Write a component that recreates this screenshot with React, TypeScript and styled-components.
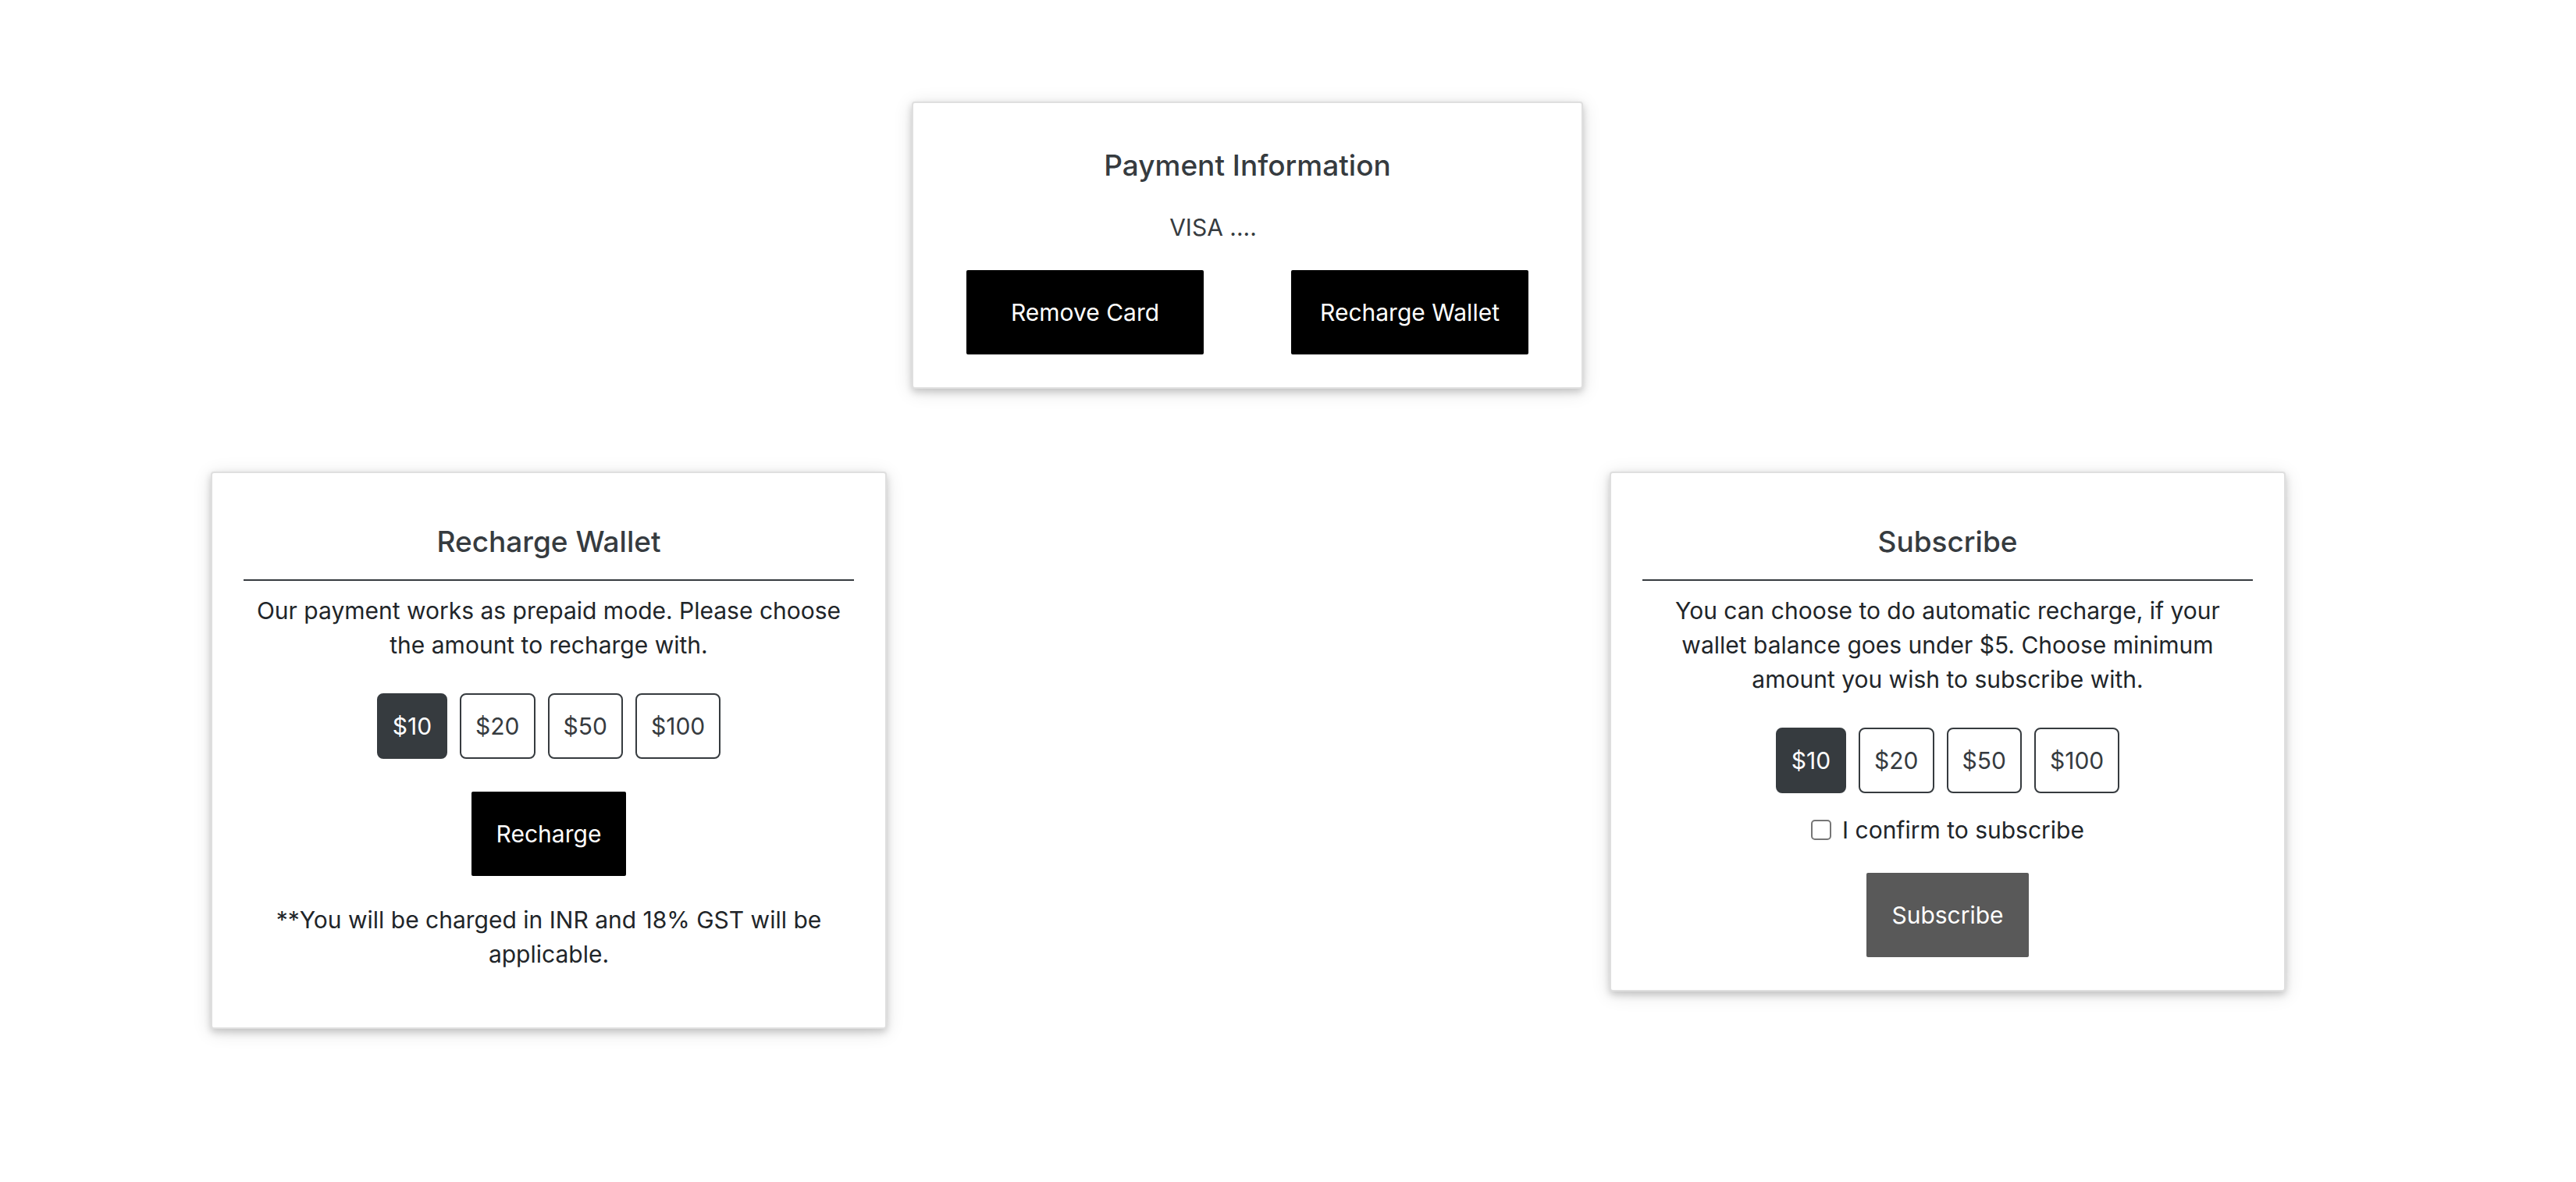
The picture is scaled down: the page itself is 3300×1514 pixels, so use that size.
import React, { useState } from 'react';
import styled, { createGlobalStyle } from 'styled-components';

const GlobalStyle = createGlobalStyle`
  *, *::before, *::after { box-sizing: border-box; }
  body {
    margin: 0;
    background: #fff;
    color: #212529;
    font-family: Inter, "Liberation Sans", sans-serif;
    font-size: 30px;
    line-height: 44px;
  }
`;

const Page = styled.main`
  display: flex;
  flex-direction: column;
  gap: 106px;
  padding: 130px 104px 130px 0;
`;

const Columns = styled.div`
  display: flex;
  flex-wrap: wrap;
  align-items: flex-start;
  justify-content: space-between;
  gap: 106px;
  padding: 0 268px 0 270px;
`;

const Card = styled.section<{ $width: number }>`
  display: flex;
  flex-direction: column;
  align-items: center;
  width: 100%;
  max-width: ${({ $width }) => $width}px;
  padding: 64px 40px 42px;
  border: 2px solid #dfdfdf;
  border-radius: 4px;
  background: #fff;
  box-shadow: 0 4px 10px rgba(0, 0, 0, 0.18), 0 4px 24px rgba(0, 0, 0, 0.12);
  text-align: center;
`;

const PaymentCard = styled(Card)`
  align-self: center;
  padding: 56px 68px 42px;
`;

const Title = styled.h2`
  margin: 0;
  color: #363b3f;
  font-size: 37px;
  font-weight: 500;
  line-height: 48px;
`;

const RuledTitle = styled(Title)`
  align-self: stretch;
  padding-bottom: 24px;
  border-bottom: 2px solid #363b3f;
`;

const CardNumber = styled.p`
  margin: 33px 0;
  padding-right: 88px;
  color: #363b3f;
`;

const Text = styled.p`
  margin: 16px 0 40px;
`;

const Note = styled.p`
  margin: 34px 0 30px;
`;

const Actions = styled.div`
  display: grid;
  grid-template-columns: 1fr 1fr;
  gap: 112px;
  width: 100%;
`;

const Button = styled.button`
  height: 108px;
  padding: 0 32px;
  border: 0;
  border-radius: 2px;
  background: #000;
  color: #fff;
  font: inherit;
  white-space: nowrap;
  cursor: pointer;

  &:disabled {
    background: #595959;
    cursor: default;
  }
`;

const Amounts = styled.div<{ $space: number }>`
  display: flex;
  gap: 16px;
  margin-bottom: ${({ $space }) => $space}px;
`;

const Amount = styled.button<{ $active: boolean }>`
  height: 84px;
  padding: 0 18px;
  border: 2px solid #363b3f;
  border-radius: 8px;
  background: ${({ $active }) => ($active ? '#363b3f' : '#fff')};
  color: ${({ $active }) => ($active ? '#fff' : '#363b3f')};
  font: inherit;
  cursor: pointer;
`;

const Confirm = styled.label`
  display: flex;
  align-items: center;
  gap: 14px;
  margin-bottom: 33px;
`;

const Checkbox = styled.input`
  appearance: none;
  width: 26px;
  height: 26px;
  margin: 0;
  border: 2px solid #767676;
  border-radius: 5px;
  background: #fff;

  &:checked {
    background: #0075ff;
    border-color: #0075ff;
  }
`;

const AMOUNTS = [10, 20, 50, 100];

function AmountPicker({ label, space }: { label: string; space: number }) {
  const [selected, setSelected] = useState(10);
  return (
    <Amounts role="group" aria-label={label} $space={space}>
      {AMOUNTS.map((amount) => (
        <Amount
          key={amount}
          type="button"
          aria-pressed={amount === selected}
          $active={amount === selected}
          onClick={() => setSelected(amount)}
        >
          ${amount}
        </Amount>
      ))}
    </Amounts>
  );
}

export default function App() {
  const [confirmed, setConfirmed] = useState(false);
  return (
    <>
      <GlobalStyle />
      <Page>
        <PaymentCard $width={860}>
          <Title>Payment Information</Title>
          <CardNumber>VISA ....</CardNumber>
          <Actions>
            <Button type="button">Remove Card</Button>
            <Button type="button">Recharge Wallet</Button>
          </Actions>
        </PaymentCard>
        <Columns>
          <Card $width={866}>
            <RuledTitle>Recharge Wallet</RuledTitle>
            <Text>Our payment works as prepaid mode. Please choose the amount to recharge with.</Text>
            <AmountPicker label="Recharge amount" space={42} />
            <Button type="button">Recharge</Button>
            <Note>**You will be charged in INR and 18% GST will be applicable.</Note>
          </Card>
          <Card $width={866}>
            <RuledTitle>Subscribe</RuledTitle>
            <Text>
              You can choose to do automatic recharge, if your wallet balance goes under $5. Choose minimum amount you
              wish to subscribe with.
            </Text>
            <AmountPicker label="Subscription amount" space={25} />
            <Confirm htmlFor="confirm-subscribe">
              <Checkbox
                id="confirm-subscribe"
                type="checkbox"
                checked={confirmed}
                onChange={(event) => setConfirmed(event.target.checked)}
              />
              I confirm to subscribe
            </Confirm>
            <Button type="button" disabled={!confirmed}>
              Subscribe
            </Button>
          </Card>
        </Columns>
      </Page>
    </>
  );
}
